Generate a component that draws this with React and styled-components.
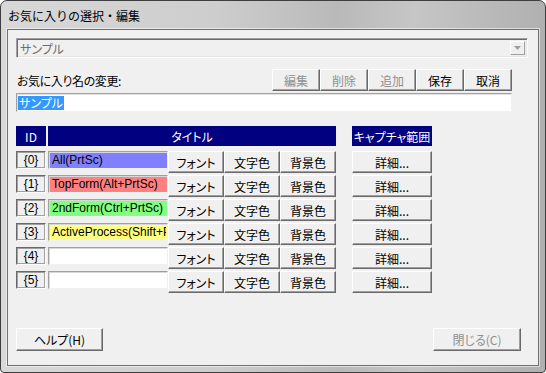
import React from "react";
import styled, { createGlobalStyle } from "styled-components";

const GlobalStyle = createGlobalStyle`
  html, body {
    margin: 0;
    padding: 0;
    background: #fff;
  }
  body {
    font-family: "Noto Sans CJK JP", "Liberation Sans", sans-serif;
    font-size: 12px;
  }
`;

const Window = styled.div`
  box-sizing: border-box;
  width: 546px;
  height: 373px;
  display: flex;
  flex-direction: column;
  padding: 0 6px 6px 6px;
  border: 1px solid #3e3e3e;
  border-radius: 7px 7px 4px 4px;
  background: linear-gradient(
    90deg,
    #d8d8d8 0%,
    #cdcdcd 40%,
    #b9b9b9 62%,
    #c6c6c6 76%,
    #b0b0b0 100%
  );
  overflow: hidden;
`;

const TitleBar = styled.div`
  height: 28px;
  display: flex;
  align-items: center;
  padding-left: 1px;
  font-size: 12px;
  color: #000;
  flex-shrink: 0;
`;

const Client = styled.div`
  box-sizing: border-box;
  flex: 1;
  display: flex;
  flex-direction: column;
  background: #f0f0f0;
  border: 1px solid #6f6f6f;
  box-shadow: 0 0 0 1px rgba(255, 255, 255, 0.55);
  padding: 8px 0 14px 8px;
  font-feature-settings: "palt";
`;

const Combo = styled.div`
  box-sizing: border-box;
  width: 512px;
  height: 20px;
  display: flex;
  align-items: center;
  justify-content: space-between;
  background: #f0f0f0;
  border: 1px solid;
  border-color: #a0a0a0 #fff #fff #a0a0a0;
  box-shadow: inset 1px 1px 0 #696969, inset -1px -1px 0 #e3e3e3;
  padding: 0 2px 0 3px;
  color: #6d6d6d;
`;

const ComboArrow = styled.div`
  box-sizing: border-box;
  width: 15px;
  height: 14px;
  display: flex;
  align-items: center;
  justify-content: center;
  background: #f0f0f0;
  border: 1px solid;
  border-color: #fff #a0a0a0 #a0a0a0 #fff;
`;

const NameRow = styled.div`
  width: 496px;
  display: flex;
  align-items: center;
  justify-content: space-between;
  margin-top: 11px;
`;

const Label = styled.span`
  padding-left: 1px;
  color: #000;
  letter-spacing: -0.4px;
`;

const ButtonGroup = styled.div`
  display: flex;
`;

const Button = styled.button`
  box-sizing: border-box;
  width: ${(p) => p.$w}px;
  height: ${(p) => p.$h || 22}px;
  margin: 0;
  margin-left: ${(p) => p.$ml || 0}px;
  padding: 0;
  display: flex;
  align-items: center;
  justify-content: center;
  flex-shrink: 0;
  background: #f0f0f0;
  border: 1px solid;
  border-color: #fff #696969 #696969 #fff;
  box-shadow: inset -1px -1px 0 #a0a0a0;
  font-family: "Noto Sans CJK JP", "Liberation Sans", sans-serif;
  font-size: 12px;
  font-feature-settings: "palt";
  color: ${(p) => (p.disabled ? "#8f8f8f" : "#000")};
  white-space: nowrap;
`;

const NameInput = styled.div`
  box-sizing: border-box;
  width: 496px;
  height: 19px;
  margin-top: 2px;
  display: flex;
  align-items: center;
  background: #fff;
  border: 1px solid;
  border-color: #a0a0a0 #f0f0f0 #f0f0f0 #a0a0a0;
  box-shadow: inset 1px 1px 0 #e3e3e3;
  padding-left: 1px;
`;

const Selected = styled.span`
  background: #3399ff;
  color: #fff;
  line-height: 14px;
  padding: 0 1px;
`;

const Table = styled.div`
  display: flex;
  flex-direction: column;
  gap: 2px;
  margin-top: 14px;
`;

const Row = styled.div`
  display: flex;
  align-items: flex-start;
  height: ${(p) => p.$h || 22}px;
  margin-bottom: ${(p) => p.$mb || 0}px;
`;

const HeaderCell = styled.div`
  box-sizing: border-box;
  width: ${(p) => p.$w}px;
  height: 20px;
  margin-left: ${(p) => p.$ml || 0}px;
  display: flex;
  align-items: center;
  justify-content: center;
  background: #000080;
  color: #fff;
  white-space: nowrap;
`;

const IdBox = styled.div`
  box-sizing: border-box;
  width: 30px;
  height: 18px;
  display: flex;
  align-items: center;
  justify-content: center;
  background: #f0f0f0;
  border: 1px solid;
  border-color: #696969 #fff #fff #696969;
  box-shadow: inset 1px 1px 0 #a0a0a0, inset -1px -1px 0 #a0a0a0;
  font-family: "Liberation Sans", sans-serif;
  color: #000;
`;

const TitleField = styled.div`
  box-sizing: border-box;
  width: 120px;
  height: 18px;
  margin-left: 2px;
  overflow: hidden;
  background: ${(p) => p.$bg};
  border: 1px solid;
  border-color: #a0a0a0 #f0f0f0 #f0f0f0 #a0a0a0;
  box-shadow: inset 1px 1px 0 #d8d8d8;
  padding-left: 3px;
  font-family: "Liberation Sans", sans-serif;
  font-size: 12px;
  line-height: 16px;
  color: #000;
`;

const TitleText = styled.div`
  width: 114px;
  overflow: hidden;
  white-space: nowrap;
`;

const Footer = styled.div`
  margin-top: auto;
  width: 505px;
  display: flex;
  justify-content: space-between;
`;

const rows = [
  { id: 0, title: "All(PrtSc)", bg: "#8080ff" },
  { id: 1, title: "TopForm(Alt+PrtSc)", bg: "#ff8080" },
  { id: 2, title: "2ndForm(Ctrl+PrtSc)", bg: "#80ff80" },
  { id: 3, title: "ActiveProcess(Shift+PrtSc)", bg: "#ffff80" },
  { id: 4, title: "", bg: "#fff" },
  { id: 5, title: "", bg: "#fff" },
];

export default function App() {
  return (
    <>
      <GlobalStyle />
      <Window>
        <TitleBar>お気に入りの選択・編集</TitleBar>
        <Client>
          <Combo>
            <span>サンプル</span>
            <ComboArrow>
              <svg width="7" height="4" viewBox="0 0 7 4">
                <path d="M0 0 H7 L3.5 4 Z" fill="#a0a0a0" />
              </svg>
            </ComboArrow>
          </Combo>

          <NameRow>
            <Label>お気に入り名の変更:</Label>
            <ButtonGroup>
              <Button $w={48} disabled>編集</Button>
              <Button $w={48} disabled>削除</Button>
              <Button $w={48} disabled>追加</Button>
              <Button $w={48}>保存</Button>
              <Button $w={48}>取消</Button>
            </ButtonGroup>
          </NameRow>

          <NameInput>
            <Selected>サンプル</Selected>
          </NameInput>

          <Table>
            <Row $h={20} $mb={3}>
              <HeaderCell $w={30}>ID</HeaderCell>
              <HeaderCell $w={288} $ml={2}>タイトル</HeaderCell>
              <HeaderCell $w={80} $ml={16}>キャプチャ範囲</HeaderCell>
            </Row>
            {rows.map((r) => (
              <Row key={r.id}>
                <IdBox>{`{${r.id}}`}</IdBox>
                <TitleField $bg={r.bg}>
                  <TitleText>{r.title}</TitleText>
                </TitleField>
                <Button $w={56}>フォント</Button>
                <Button $w={56}>文字色</Button>
                <Button $w={56}>背景色</Button>
                <Button $w={80} $ml={16}>詳細...</Button>
              </Row>
            ))}
          </Table>

          <Footer>
            <Button $w={87} $h={23}>ヘルプ(H)</Button>
            <Button $w={88} $h={23} disabled>閉じる(C)</Button>
          </Footer>
        </Client>
      </Window>
    </>
  );
}
